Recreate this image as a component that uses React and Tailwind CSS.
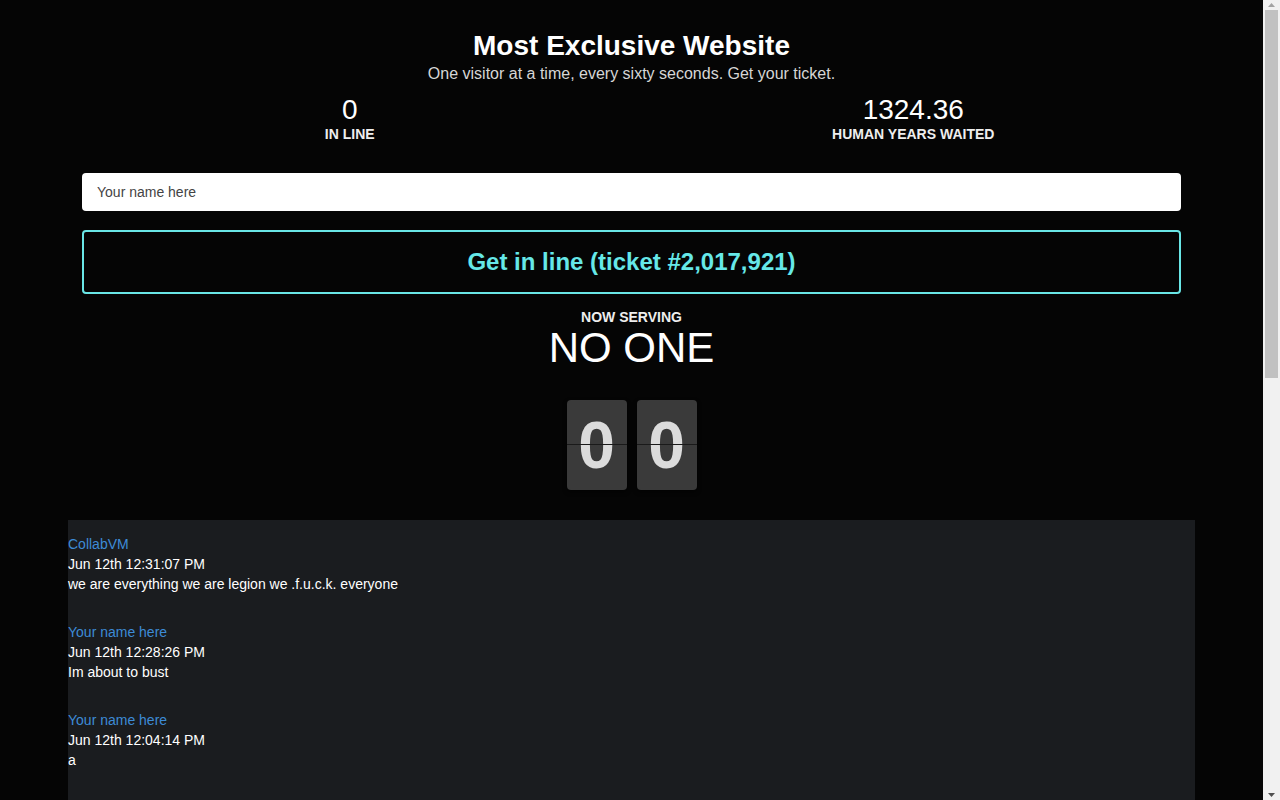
import React from "react";

const messages = [
  { name: "CollabVM", date: "Jun 12th 12:31:07 PM", text: "we are everything we are legion we .f.u.c.k. everyone" },
  { name: "Your name here", date: "Jun 12th 12:28:26 PM", text: "Im about to bust" },
  { name: "Your name here", date: "Jun 12th 12:04:14 PM", text: "a" },
];

function FlipCard({ digit }) {
  return (
    <div className="relative w-[60px] h-[90px] rounded-[4px] bg-[#3a3a3a] flex items-center justify-center shadow-[0_2px_4px_rgba(0,0,0,0.6)]">
      <span className="text-[66px] font-bold text-[#dcdcdc] leading-none">{digit}</span>
      <div className="absolute left-0 right-0 top-[44px] h-px bg-[#1a1a1a]" />
    </div>
  );
}

function Scrollbar() {
  return (
    <div className="w-[17px] h-full bg-[#f1f1f1] flex flex-col">
      <div className="h-[10px] flex items-center justify-center">
        <svg width="7" height="4" viewBox="0 0 7 4"><path d="M3.5 0L7 4H0z" fill="#a3a3a3" /></svg>
      </div>
      <div className="h-[368px] ml-[2px] mr-[2px] bg-[#c1c1c1]" />
      <div className="flex-1" />
      <div className="h-[10px] flex items-center justify-center">
        <svg width="7" height="4" viewBox="0 0 7 4"><path d="M0 0H7L3.5 4z" fill="#505050" /></svg>
      </div>
    </div>
  );
}

export default function App() {
  return (
    <div className="h-screen flex bg-[#050505] text-white font-['Liberation_Sans',Arial,sans-serif] overflow-hidden">
      <div className="flex-1 h-full overflow-hidden">
        <div className="w-[1127px] mx-auto pt-[29px]">
          <div className="text-center">
            <h1 className="text-[28px] font-bold leading-[34px] text-white">Most Exclusive Website</h1>
            <p className="mt-px text-[16px] leading-[20px] text-[#d6d6d6]">One visitor at a time, every sixty seconds. Get your ticket.</p>
          </div>
          <div className="grid grid-cols-2 mt-[11px] text-center">
            <div>
              <div className="text-[28px] leading-[30px]">0</div>
              <div className="text-[14px] font-bold leading-[18px] text-[#eeeeee]">IN LINE</div>
            </div>
            <div>
              <div className="text-[28px] leading-[30px]">1324.36</div>
              <div className="text-[14px] font-bold leading-[18px] text-[#eeeeee]">HUMAN YEARS WAITED</div>
            </div>
          </div>
          <div className="px-[14px] mt-[30px]">
            <input
              className="block w-full h-[38px] rounded-[4px] bg-white px-[15px] text-[14px] text-[#333] placeholder:text-[#444] outline-none"
              placeholder="Your name here"
            />
            <button className="mt-[19px] w-full h-[64px] rounded-[4px] border-2 border-[#69e6e6] bg-transparent text-[24px] font-bold text-[#66e8e8]">
              Get in line (ticket #2,017,921)
            </button>
          </div>
          <div className="text-center mt-[15px]">
            <div className="text-[14px] font-bold leading-[16px] text-[#eeeeee]">NOW SERVING</div>
            <div className="text-[42px] leading-[45px] text-white">NO ONE</div>
          </div>
          <div className="flex justify-center gap-[10px] mt-[30px]">
            <FlipCard digit="0" />
            <FlipCard digit="0" />
          </div>
          <div className="mt-[30px] bg-[#1a1c1f] pt-[14px] pb-[400px]">
            {messages.map((m, i) => (
              <div key={i} className="mb-[28px] text-[14px] leading-[20px]">
                <div className="text-[#3d8bd6]">{m.name}</div>
                <div className="text-white">{m.date}</div>
                <div className="text-white">{m.text}</div>
              </div>
            ))}
          </div>
        </div>
      </div>
      <Scrollbar />
    </div>
  );
}
